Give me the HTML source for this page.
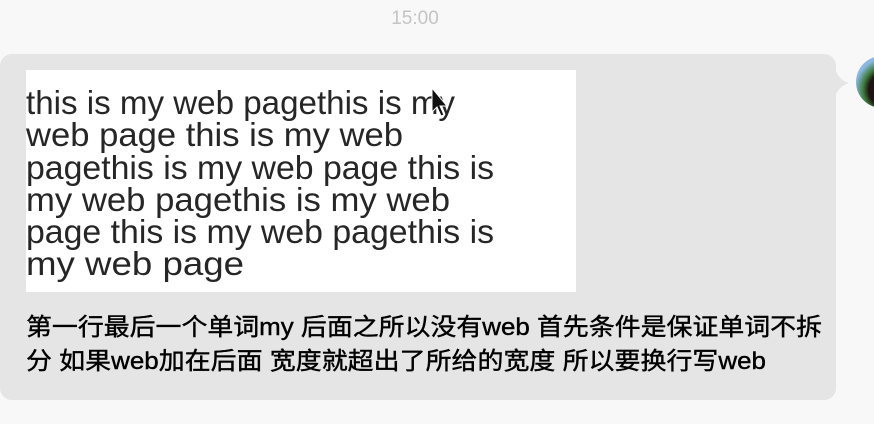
<!DOCTYPE html>
<html><head><meta charset="utf-8"><style>
html,body{margin:0;padding:0;background:#f8f8f8;width:874px;height:424px;overflow:hidden;position:relative}
.time{position:absolute;top:8px;left:0;width:830px;text-align:center;font:19px "Liberation Sans",sans-serif;color:#c4c4c4}
.bubble{position:absolute;left:0;top:54px;width:836px;height:346px;background:#e5e5e5;border-radius:12px}
.av{position:absolute;left:856px;top:56px;width:52px;height:52px;border-radius:50%;background:radial-gradient(circle at 60% 65%,#1e1414 40%,#3d7a3a 52%,#8ab8e0 70%)}
svg{position:absolute;left:0;top:0}
</style></head><body>
<div class="time">15:00</div>
<div class="bubble"></div>
<div class="av"></div>
<svg width="874" height="424">
<path d="M834 66 Q838 80 849 83 Q839 86 834 98 Z" fill="#e5e5e5"/>
<rect x="26" y="70" width="550" height="222" fill="#fff"/>
<g font-family="Liberation Sans, sans-serif" font-size="33" fill="#262626">
<text x="26" y="114" textLength="429" lengthAdjust="spacingAndGlyphs">this is my web pagethis is my</text>
<text x="26" y="146" textLength="377" lengthAdjust="spacingAndGlyphs">web page this is my web</text>
<text x="26" y="179" textLength="468" lengthAdjust="spacingAndGlyphs">pagethis is my web page this is</text>
<text x="26" y="211" textLength="424" lengthAdjust="spacingAndGlyphs">my web pagethis is my web</text>
<text x="26" y="243" textLength="468" lengthAdjust="spacingAndGlyphs">page this is my web pagethis is</text>
<text x="26" y="275" textLength="218" lengthAdjust="spacingAndGlyphs">my web page</text>
</g>
<path d="M432 88 L432 112 L437 107 L441 116 L444 115 L440 106 L447 106 Z" fill="#111" stroke="#fff" stroke-width="1"/>
<g font-family="Liberation Sans, Noto Sans CJK SC, sans-serif" font-size="24" fill="#000" stroke="#000" stroke-width="0.4">
<text x="26" y="335" textLength="796" lengthAdjust="spacingAndGlyphs">第一行最后一个单词my 后面之所以没有web 首先条件是保证单词不拆</text>
<text x="26" y="369" textLength="740" lengthAdjust="spacingAndGlyphs">分 如果web加在后面 宽度就超出了所给的宽度 所以要换行写web</text>
</g>
</svg>
</body></html>
